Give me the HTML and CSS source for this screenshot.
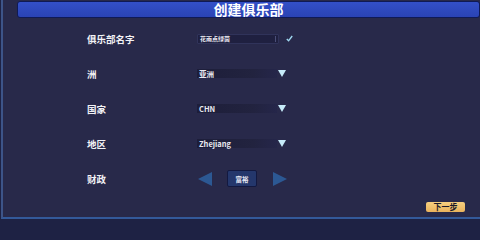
FILE: index.html
```html
<!DOCTYPE html>
<html>
<head>
<meta charset="utf-8">
<link rel="stylesheet" href="styles.css">
</head>
<body>
<div class="screen">
  <div class="frame">
    <div class="titlebar">创建俱乐部</div>
    <div class="form">
      <div class="row">
        <div class="label">俱乐部名字</div>
        <div class="field">
          <div class="input"><span>花雨点绿茵</span><i class="caret"></i></div>
          <svg class="check" width="7" height="7" viewBox="0 0 7 7"><path d="M0.8 4 L2.6 5.8 L6.2 1" fill="none" stroke="#9fd8f0" stroke-width="1.4"/></svg>
        </div>
      </div>
      <div class="row">
        <div class="label">洲</div>
        <div class="field">
          <div class="select">亚洲</div>
          <span class="tri"></span>
        </div>
      </div>
      <div class="row">
        <div class="label">国家</div>
        <div class="field">
          <div class="select">CHN</div>
          <span class="tri"></span>
        </div>
      </div>
      <div class="row">
        <div class="label">地区</div>
        <div class="field">
          <div class="select">Zhejiang</div>
          <span class="tri"></span>
        </div>
      </div>
      <div class="row">
        <div class="label">财政</div>
        <div class="field money">
          <span class="arrow left"></span>
          <div class="mbtn">富裕</div>
          <span class="arrow right"></span>
        </div>
      </div>
    </div>
    <div class="footer"><div class="next">下一步</div></div>
  </div>
</div>
</body>
</html>
```
FILE: styles.css
```css
html, body {
  margin: 0;
  padding: 0;
  background: #1e2244;
}
.screen {
  width: 480px;
  height: 221px;
  background: #1e2244;
  overflow: hidden;
  font-family: "Noto Sans CJK SC", "Noto Sans", sans-serif;
}
.frame {
  height: 219px;
  box-sizing: border-box;
  margin-left: 1px;
  border-left: 2px solid #3d5488;
  border-bottom: 2px solid #33599a;
  background: #28294a;
  display: flex;
  flex-direction: column;
}
.titlebar {
  margin: 1px 0 0 14px;
  height: 17px;
  box-sizing: border-box;
  background: linear-gradient(#3350c8, #2a43b4);
  border: 1px solid #0f1a56;
  border-radius: 3px;
  color: #ffffff;
  font-weight: 700;
  font-size: 14px;
  line-height: 15px;
  text-align: center;
}
.form {
  margin-top: 3px;
  display: flex;
  flex-direction: column;
}
.row {
  height: 35px;
  display: flex;
  align-items: center;
}
.label {
  width: 110px;
  padding-left: 84px;
  color: #f2f2f6;
  font-weight: 700;
  font-size: 9.5px;
  line-height: 12px;
}
.field {
  display: flex;
  align-items: center;
}
.input {
  width: 82px;
  height: 10px;
  box-sizing: border-box;
  background: #1f2040;
  border: 1px solid #30335a;
  border-radius: 1px;
  display: flex;
  align-items: center;
  justify-content: space-between;
  padding: 0 2px 0 2px;
}
.input span {
  color: #e8e8f0;
  font-size: 6px;
  font-weight: 700;
  line-height: 8px;
}
.select {
  color: #e8e8f0;
  font-size: 7.5px;
  font-weight: 700;
  line-height: 8px;
}
.caret {
  width: 1px;
  height: 6px;
  background: #4b4f78;
}
.check {
  margin-left: 7px;
}
.select {
  width: 80px;
  height: 9px;
  box-sizing: border-box;
  padding-left: 2px;
  background: linear-gradient(90deg, #1d1e3a, #22233f 70%, #25264a);
  display: flex;
  align-items: center;
}
.tri {
  margin-left: 1px;
  width: 0;
  height: 0;
  border-left: 4.5px solid transparent;
  border-right: 4.5px solid transparent;
  border-top: 7px solid #c7ecfa;
}
.money {
  margin-left: 1px;
}
.arrow {
  width: 0;
  height: 0;
  border-top: 7.5px solid transparent;
  border-bottom: 7.5px solid transparent;
}
.arrow.left {
  border-right: 14px solid #2c5893;
}
.arrow.right {
  border-left: 14px solid #2c5893;
}
.mbtn {
  margin: 0 16px 0 15px;
  width: 30px;
  height: 17px;
  box-sizing: border-box;
  background: #24376c;
  border: 1px solid #131940;
  border-radius: 2px;
  color: #e6e8f4;
  font-size: 6.5px;
  font-weight: 700;
  display: flex;
  align-items: center;
  justify-content: center;
}
.footer {
  flex: 1;
  display: flex;
  justify-content: flex-end;
  align-items: flex-start;
  padding: 6px 15px 0 0;
}
.next {
  width: 39px;
  height: 10px;
  background: linear-gradient(#f6cf7f, #e9b25c);
  border-radius: 2px;
  color: #1a1a2a;
  font-size: 8px;
  font-weight: 700;
  line-height: 10px;
  text-align: center;
}
```
